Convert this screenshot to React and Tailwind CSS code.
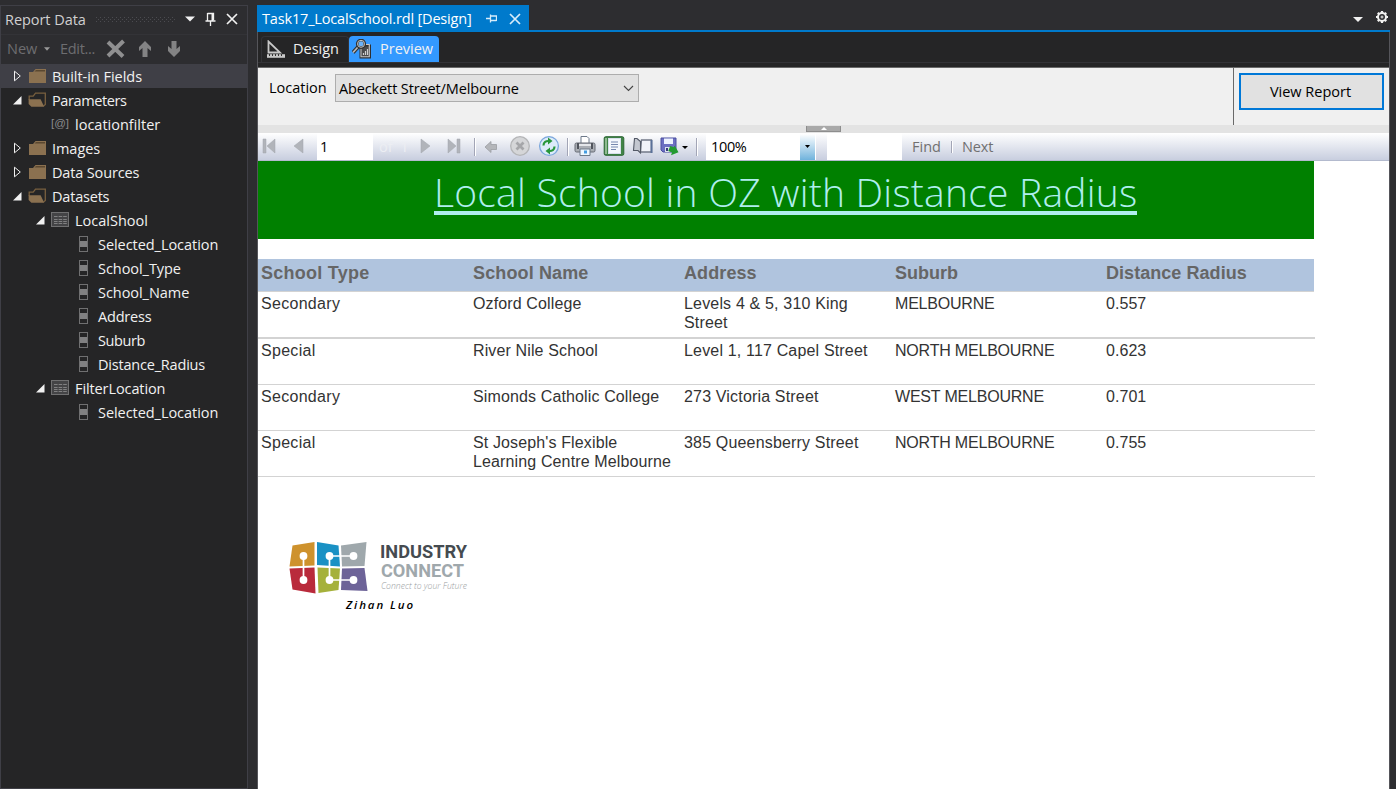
import React from 'react';

const UI = "font-['Open_Sans','Noto_Sans',sans-serif]";

function Folder({ open }) {
  return open ? (
    <svg width="19" height="16" viewBox="0 0 19 16">
      <path d="M1.2 8V4.2H5.2L7.5 1.2H17.3V12.5L15.5 14" fill="none" stroke="#79603f" strokeWidth="1.3" />
      <path d="M.6 7.2H12.6L16.2 14.8H3.4L.6 12Z" fill="#8b7150" />
    </svg>
  ) : (
    <svg width="19" height="16" viewBox="0 0 19 16">
      <path d="M1 4H5L7.5 1H18V15H1Z" fill="#8b7150" />
      <path d="M6.5 3.5L8 2H17V3.5Z" fill="#5b4830" />
    </svg>
  );
}

function Dataset() {
  return (
    <svg width="19" height="16" viewBox="0 0 19 16">
      <rect x=".5" y=".5" width="17" height="14" fill="#444446" stroke="#707071" />
      <path d="M3 4.5H16M3 7.5H16M3 9.5H16M3 11.5H16" stroke="#818182" strokeDasharray="3.6 1" />
    </svg>
  );
}

function Field() {
  return (
    <svg width="11" height="18" viewBox="0 0 11 18">
      <rect x=".5" y="1.5" width="8" height="15" fill="#252526" stroke="#707071" />
      <rect x="1" y="6" width="7" height="6" fill="#818182" />
    </svg>
  );
}

function Arrow({ open }) {
  return open ? (
    <svg width="10" height="10" viewBox="0 0 10 10"><path d="M9.5 1V9.5H1Z" fill="#f1f1f1" /></svg>
  ) : (
    <svg width="10" height="12" viewBox="0 0 10 12"><path d="M2.5 1.2L8.3 6L2.5 10.8Z" fill="none" stroke="#f1f1f1" /></svg>
  );
}

const tree = [
  { level: 0, kind: 'folder', text: 'Built-in Fields', track: 'tracking-[-0.03px]' },
  { level: 0, kind: 'folder', open: true, text: 'Parameters', track: 'tracking-[-0.4px]' },
  { level: 1, kind: 'param', text: 'locationfilter', track: 'tracking-[0px]' },
  { level: 0, kind: 'folder', text: 'Images', track: 'tracking-[-0.05px]' },
  { level: 0, kind: 'folder', text: 'Data Sources', track: 'tracking-[-0.15px]' },
  { level: 0, kind: 'folder', open: true, text: 'Datasets', track: 'tracking-[-0.2px]' },
  { level: 1, kind: 'dataset', open: true, text: 'LocalShool', track: 'tracking-[0px]' },
  { level: 2, kind: 'field', text: 'Selected_Location', track: 'tracking-[-0.05px]' },
  { level: 2, kind: 'field', text: 'School_Type', track: 'tracking-[-0.05px]' },
  { level: 2, kind: 'field', text: 'School_Name', track: 'tracking-[-0.05px]' },
  { level: 2, kind: 'field', text: 'Address', track: 'tracking-[-0.2px]' },
  { level: 2, kind: 'field', text: 'Suburb', track: 'tracking-[-0.4px]' },
  { level: 2, kind: 'field', text: 'Distance_Radius', track: 'tracking-[-0.2px]' },
  { level: 1, kind: 'dataset', open: true, text: 'FilterLocation', track: 'tracking-[-0.1px]' },
  { level: 2, kind: 'field', text: 'Selected_Location', track: 'tracking-[-0.05px]' },
];

const indent = ['pl-[11px]', 'pl-[34px]', 'pl-[57px]'];

function TreeRow({ item, selected }) {
  return (
    <div className={`flex h-6 items-center ${indent[item.level]} ${selected ? 'bg-[#3f3f46]' : ''}`}>
      <span className="flex w-4 items-center">
        {(item.kind === 'folder' || item.kind === 'dataset') && <Arrow open={item.open} />}
      </span>
      <span className="flex w-6 items-center">
        {item.kind === 'folder' && <Folder open={item.open} />}
        {item.kind === 'dataset' && <Dataset />}
        {item.kind === 'field' && <span className="pl-[5px]"><Field /></span>}
        {item.kind === 'param' && (
          <span className="w-[18px] text-center font-['Liberation_Sans',sans-serif] text-[11.5px] leading-none text-[#8a8a8b]">[@]</span>
        )}
      </span>
      <span className={`whitespace-nowrap pt-[2px] text-[14.5px] leading-6 text-[#f1f1f1] ${item.track}`}>{item.text}</span>
    </div>
  );
}

function Pin({ className, color }) {
  return (
    <svg className={className} width="13" height="15" viewBox="0 0 13 15" fill="none" stroke={color}>
      <path d="M3.5 1.5H9.5V8M3.5 1V8.5M1.5 9H11.5M6.5 9V14" strokeWidth="1.3" />
      <path d="M8.5 1.5V9" strokeWidth="2" />
    </svg>
  );
}

function Cross({ color, size }) {
  return (
    <svg width={size} height={size} viewBox="0 0 12 12"><path d="M1 1L11 11M11 1L1 11" stroke={color} strokeWidth="1.7" /></svg>
  );
}

function ReportData() {
  return (
    <aside className="mt-[5px] flex w-[248px] shrink-0 flex-col border border-[#3f3f46] bg-[#252526]">
      <div className="flex h-[28px] items-center bg-[#2d2d30] pl-1">
        <span className="w-[91px] whitespace-nowrap text-[14.5px] tracking-[-0.05px] text-[#d0d0d0]">Report Data</span>
        <svg width="80" height="7" viewBox="0 0 80 7">
          <defs>
            <pattern id="grip" width="4" height="4" patternUnits="userSpaceOnUse">
              <rect width="1" height="1" fill="#4b4b50" /><rect x="2" y="2" width="1" height="1" fill="#4b4b50" />
            </pattern>
          </defs>
          <rect width="80" height="6" fill="url(#grip)" />
        </svg>
        <svg className="-mt-[2px] ml-[9px]" width="10" height="6" viewBox="0 0 10 6"><path d="M0 .5H10L5 5.5Z" fill="#f1f1f1" /></svg>
        <Pin className="-mt-[2px] ml-[9px]" color="#f1f1f1" />
        <span className="-mt-[2px] ml-[9px]"><Cross color="#f1f1f1" size={12} /></span>
      </div>
      <div className="flex h-[30px] items-center border-t border-[#333337] bg-[#2d2d30] pb-[2px] pl-[6px] text-[14.5px] text-[#6d6d70]">
        <span className="w-[37px]">New</span>
        <svg width="6" height="4" viewBox="0 0 6 4"><path d="M0 .3H6L3 3.7Z" fill="#999" /></svg>
        <span className="ml-[10px] w-[46px] whitespace-nowrap tracking-[-0.3px]">Edit...</span>
        <svg width="20" height="20" viewBox="0 0 20 20"><path d="M2 3L17 17.5M17.5 2L2 17" stroke="#8f8f90" strokeWidth="4" /></svg>
        <svg className="ml-[12px]" width="14" height="18" viewBox="0 0 14 18"><path d="M7 1L13 7V11L9.5 8V17H4.5V8L1 11V7Z" fill="#838384" /></svg>
        <svg className="ml-[15px]" width="14" height="18" viewBox="0 0 14 18"><path d="M7 17L13 11V6L9.5 9V1H4.5V9L1 6V11Z" fill="#838384" /></svg>
      </div>
      <div>
        {tree.map((item, i) => <TreeRow key={i} item={item} selected={i === 0} />)}
      </div>
    </aside>
  );
}

function Nav({ type }) {
  const shapes = {
    first: <path d="M1 1H4V15H1ZM13 1V15L5 8Z" />,
    prev: <path d="M10 1V15L1 8Z" />,
    next: <path d="M1 1V15L10 8Z" />,
    last: <path d="M1 1V15L9 8ZM10 1H13V15H10Z" />,
  };
  return <svg width="14" height="16" viewBox="0 0 14 16" fill="#b1b4ba" stroke="#a3a6ac" strokeWidth=".5">{shapes[type]}</svg>;
}

function Divider() {
  return <span className="h-[18px] w-[2px] shrink-0 border-l border-[#a2a5b6] bg-white" />;
}

function Toolbar() {
  return (
    <div className="flex h-7 items-center border-b border-[#b3bace] bg-linear-to-b from-white to-[#c8cedf] text-[14.5px]">
      <span className="-mt-[2px] ml-1"><Nav type="first" /></span>
      <span className="-mt-[2px] ml-[17px]"><Nav type="prev" /></span>
      <span className="ml-[10px] h-[27px] w-14 bg-white pl-[3px] leading-[27px] text-black">1</span>
      <span className="ml-[6px] w-[34px] whitespace-pre text-[#eceef3]">of  1</span>
      <span className="-mt-[2px] ml-[7px]"><Nav type="next" /></span>
      <span className="-mt-[2px] ml-[13px]"><Nav type="last" /></span>
      <span className="ml-[13px] flex"><Divider /></span>
      <svg className="ml-[8px]" width="14" height="14" viewBox="0 0 14 14"><path d="M1 7L7 1.5V4.5H12.5V9.5H7V12.5Z" fill="#b4b6ba" stroke="#9b9da2" strokeWidth=".8" /></svg>
      <svg className="-mt-[2px] ml-[11px]" width="22" height="22" viewBox="0 0 22 22"><circle cx="11" cy="11" r="9.3" fill="#d5d6d8" stroke="#b4b5b7" strokeWidth="1.3" /><path d="M7.5 7.5L14.5 14.5M14.5 7.5L7.5 14.5" stroke="#a5a6a9" strokeWidth="2.8" /></svg>
      <svg className="-mt-[2px] ml-[7px]" width="22" height="22" viewBox="0 0 22 22">
        <circle cx="11" cy="11" r="9.4" fill="#dcebfa" stroke="#7ba7dc" strokeWidth="1.3" />
        <path d="M5.5 10.5C5.5 7 8 5.8 11 6M16.5 11.5C16.5 15 14 16.2 11 16" fill="none" stroke="#27963a" strokeWidth="2.2" />
        <path d="M10 2.5L14.5 6L10 9.5ZM12 12.5L7.5 16L12 19.5Z" fill="#27963a" />
      </svg>
      <span className="ml-[7px] flex"><Divider /></span>
      <svg className="-mt-[2px] ml-[5px]" width="22" height="22" viewBox="0 0 22 22">
        <path d="M7 8V1.5H13L15 3.5V8" fill="#fff" stroke="#6d7989" />
        <rect x="1" y="8" width="20" height="9" rx="1.5" fill="#a9adb4" stroke="#666b75" />
        <path d="M4 8V14M18 8V14" stroke="#50545d" strokeWidth="2" />
        <path d="M5 10H17" stroke="#e4e6ea" strokeWidth="2" />
        <path d="M6 14H16V20.5H6Z" fill="#edf7ff" stroke="#6c7888" /><path d="M10 15.5H13V18.5H10Z" fill="#439ce0" />
      </svg>
      <svg className="-mt-[2px] ml-[7px]" width="22" height="22" viewBox="0 0 22 22">
        <rect x="1.2" y="1.7" width="19.6" height="18.6" rx="1.5" fill="#408447" stroke="#2d6736" />
        <path d="M2 3H4V19H2Z" fill="#8fba91" />
        <rect x="5.5" y="3.5" width="12" height="15" fill="#f4f7fc" stroke="#d7dfeb" />
        <path d="M8 7H15M8 9.5H15M8 12H15M8 14.5H13" stroke="#7587ad" strokeWidth="1.2" />
      </svg>
      <svg className="-mt-[2px] ml-[7px]" width="22" height="20" viewBox="0 0 22 20">
        <path d="M9.5 4H19.5V16H8.5Z" fill="#f1f3f9" stroke="#737988" strokeWidth="1.3" />
        <path d="M2.5 2.5H5L8.5 5.5V17L6 14.5H1.5Z" fill="#c3c7d0" stroke="#535966" strokeWidth="1.1" />
        <path d="M19.5 4V17" stroke="#5a7199" strokeWidth="2" />
      </svg>
      <svg className="ml-[5px]" width="29" height="22" viewBox="0 0 29 22">
        <path d="M2 2H17V16H4L2 14Z" fill="#6c6fc2" stroke="#4a4ea0" />
        <path d="M5 2.5H14V8H5Z" fill="#edf2ff" /><path d="M6 11H13V16H6Z" fill="#dce2ef" /><path d="M7 12H9V15H7Z" fill="#35397a" />
        <path d="M10 11.5H14V9.5L20 14.5L14 20V17H10Z" fill="#249a31" transform="rotate(20 15 14)" />
        <path d="M23 10H29L26 13Z" fill="#000" />
      </svg>
      <span className="ml-[8px] flex"><Divider /></span>
      <span className="ml-[8px] h-[27px] w-[94px] bg-white pl-[5px] leading-[28px] tracking-[-0.35px] text-black">100%</span>
      <span className="flex h-[26px] w-[15px] items-center justify-center bg-linear-to-b from-white to-[#6fb3dc]">
        <svg width="5" height="3" viewBox="0 0 5 3"><path d="M0 0H5L2.5 3Z" fill="#000" /></svg>
      </span>
      <span className="h-[27px] w-px bg-white" />
      <span className="ml-[11px] h-[27px] w-[75px] bg-white" />
      <span className="ml-[10px] w-[39px] text-[#707070]">Find</span>
      <span className="flex h-3 w-[2px] border-l border-[#a2a5b6] bg-white" />
      <span className="ml-[9px] tracking-[-0.1px] text-[#707070]">Next</span>
    </div>
  );
}

const headings = ['School Type', 'School Name', 'Address', 'Suburb', 'Distance Radius'];
const headTracks = ['tracking-[0.25px]', 'tracking-[0.13px]', 'tracking-[0.1px]', 'tracking-[0px]', 'tracking-[0.05px]'];
const cellTracks = ['tracking-[0.3px]', 'tracking-[0.13px]', 'tracking-[0.17px]', 'tracking-[-0.2px]', 'tracking-[0.05px]'];
const schools = [
  ['Secondary', 'Ozford College', 'Levels 4 & 5, 310 King Street', 'MELBOURNE', '0.557'],
  ['Special', 'River Nile School', 'Level 1, 117 Capel Street', 'NORTH MELBOURNE', '0.623'],
  ['Secondary', 'Simonds Catholic College', '273 Victoria Street', 'WEST MELBOURNE', '0.701'],
  ['Special', "St Joseph's Flexible Learning Centre Melbourne", '385 Queensberry Street', 'NORTH MELBOURNE', '0.755'],
];

function Logo() {
  return (
    <svg className="ml-[30px] mt-[58px] block" width="186" height="82" viewBox="288 535 186 82">
      <path d="M292.5 545.5L314.5 542V565.5L289.5 566.5Z" fill="#ce922d" />
      <path d="M317 542L338.5 545.5L340 566.5L317 565Z" fill="#1a91c4" />
      <path d="M341 545.5L366.5 542L364.5 566L342 566.5Z" fill="#9fa8ac" />
      <path d="M289.5 568.5L314.5 567.5L315.5 593.5L292.5 589.5Z" fill="#b92a3b" />
      <path d="M317.5 567.5L340 568.5L338.5 590L318.5 593Z" fill="#a5b13b" />
      <path d="M342 568.5L364.5 568L367.5 591L341 590Z" fill="#6d6398" />
      <path d="M303.5 556V580M329.5 556H353.5M329.5 556V580M329.5 580H353.5" fill="none" stroke="#fff" strokeWidth="1.7" />
      <g fill="#fff">
        <circle cx="303.5" cy="556" r="3.9" /><circle cx="303.5" cy="580" r="3.9" />
        <circle cx="329.5" cy="556" r="3.9" /><circle cx="353.5" cy="556" r="3.9" />
        <circle cx="329.5" cy="580" r="3.9" /><circle cx="353.5" cy="580" r="3.9" />
      </g>
      <g fontFamily="Roboto, sans-serif">
        <text x="380" y="558" fontSize="18.5" fontWeight="700" fill="#454b50" textLength="87" lengthAdjust="spacingAndGlyphs">INDUSTRY</text>
        <text x="381" y="577" fontSize="18.5" fontWeight="700" fill="#9fa8ac" textLength="83" lengthAdjust="spacingAndGlyphs">CONNECT</text>
      </g>
      <text x="381" y="589" fontFamily="Open Sans, sans-serif" fontSize="9.5" fontStyle="italic" fontWeight="300" fill="#999da0" textLength="86" lengthAdjust="spacingAndGlyphs">Connect to your Future</text>
      <text x="346" y="609" fontFamily="Open Sans, sans-serif" fontSize="11.5" fontStyle="italic" fontWeight="600" fill="#000" textLength="67" lengthAdjust="spacing">Zihan Luo</text>
    </svg>
  );
}

function Report() {
  return (
    <div className="flex-1 bg-white">
      <div className="h-[78px] w-[1056px] bg-[#008000]">
        <h1 className="ml-[176px] pt-[7px] h-[54px] w-[703px] whitespace-nowrap border-b-4 border-[#afeeee] text-[39px] font-light leading-[48px] tracking-[0.23px] text-[#afeeee]">Local School in OZ with Distance Radius</h1>
      </div>
      <div className="mt-5 w-[1057px] font-['Liberation_Sans',sans-serif] text-[#333]">
        <div className="grid h-[33px] w-[1056px] grid-cols-[212px_211px_211px_211px_211px] border-b border-[#d3d3d3] bg-[#b0c4de] text-[18px] font-bold leading-[28px] text-[#666]">
          {headings.map((h, j) => <div key={h} className={`whitespace-nowrap pl-[3px] ${headTracks[j]}`}>{h}</div>)}
        </div>
        {schools.map((row, i) => (
          <div key={i} className={`grid grid-cols-[212px_211px_211px_211px_211px] border-[#d3d3d3] pt-[2px] text-base leading-[19px] ${i === 0 ? 'h-[47px] border-b-2' : 'h-[46px] border-b'}`}>
            {row.map((cell, j) => <div key={j} className={`pl-[3px] pr-1 ${cellTracks[j]}`}>{cell}</div>)}
          </div>
        ))}
      </div>
      <Logo />
    </div>
  );
}

function Parameters() {
  return (
    <div className="flex h-[57px] bg-[#f0f0f0] text-[14.5px] text-black">
      <span className="ml-[11px] mt-[10px] w-[66px] leading-5">Location</span>
      <div className="mt-[6px] flex h-7 w-[304px] items-center justify-between border border-[#adadad] bg-[#e1e1e1] pl-[3px] pr-[4px]">
        <span className="whitespace-nowrap pt-[2px] tracking-[-0.13px]">Abeckett Street/Melbourne</span>
        <svg width="11" height="7" viewBox="0 0 11 7"><path d="M1 1L5.5 5.5L10 1" fill="none" stroke="#444" strokeWidth="1.1" /></svg>
      </div>
      <div className="ml-auto w-[156px] border-l border-[#696969] pl-[5px] pt-[5px]">
        <button className="h-[37px] w-[145px] border-2 border-[#0078d7] bg-[#e1e1e1] pr-[2px]">View Report</button>
      </div>
    </div>
  );
}

function Gear() {
  return (
    <svg width="14" height="14" viewBox="0 0 14 14" fill="none" stroke="#f1f1f1">
      <circle cx="7" cy="7" r="4" strokeWidth="2" /><circle cx="7" cy="7" r="1" />
      <path d="M7 1V3M7 11V13M1 7H3M11 7H13M2.8 2.8L4 4M10 10L11.2 11.2M11.2 2.8L10 4M2.8 11.2L4 10" strokeWidth="2.2" />
    </svg>
  );
}

export default function App() {
  return (
    <div className={`flex h-[789px] w-[1396px] overflow-hidden bg-[#2d2d30] ${UI}`}>
      <ReportData />
      <main className="ml-[9px] flex w-[1139px] shrink-0 flex-col">
        <div className="mt-[5px] flex h-[25px] items-end">
          <div className="flex h-[25px] w-[272px] items-center bg-[#007acc] pl-[5px] pt-[2px] text-[14.5px] text-white">
            <span className="w-[210px] whitespace-nowrap tracking-[-0.17px]">Task17_LocalSchool.rdl [Design]</span>
            <svg className="ml-[14px]" width="11" height="9" viewBox="0 0 11 9" fill="none" stroke="#d8ecfa"><path d="M0 4.5H4M4.5 .5V8.5M4.5 2H10.5V7M4.5 6.5H10.5" strokeWidth="1.3" /></svg>
            <span className="ml-[12px]"><Cross color="#d8ecfa" size={12} /></span>
          </div>
          <div className="ml-auto flex h-[26px] items-center gap-3">
            <svg className="mt-1" width="10" height="5" viewBox="0 0 10 5"><path d="M0 0H10L5 5Z" fill="#f1f1f1" /></svg>
            <Gear />
          </div>
          <span className="w-[7px]" />
        </div>
        <div className="flex w-[1133px] flex-1 flex-col border-x border-[#55555a]">
          <div className="-mx-px h-[2px] bg-[#007acc]" />
          <div className="flex h-[35px] shrink-0 flex-col bg-[#252526]">
            <div className="flex h-[31px] items-end border-b border-[#333337] pl-[3px] text-[14.5px] text-[#f1f1f1]">
              <div className="flex h-[26px] w-[88px] items-center rounded-t-sm border border-b-0 border-[#333337] pb-px pl-[5px]">
                <svg width="18" height="19" viewBox="0 0 18 19" fill="none" stroke="#c8c8c8">
                  <path d="M1.5 1.5V12.5H13Z" strokeWidth="1.8" /><path d="M4.5 8V10H6.8Z" stroke="#252526" />
                  <path d="M0 16H18" strokeWidth="3.6" /><path d="M2.5 14V16M5.5 14V16M8.5 14V16M11.5 14V16M14.5 14V16" stroke="#333" />
                </svg>
                <span className="ml-[8px]">Design</span>
              </div>
              <div className="flex h-[26px] w-[90px] items-center rounded-t-sm bg-[#3399ff] pb-px pl-[3px]">
                <svg width="20" height="20" viewBox="0 0 20 20" fill="none">
                  <path d="M8.5 6.5H18V18.5H8.5Z" fill="#4a4a4a" stroke="#303030" strokeWidth="2" />
                  <path d="M9 8V17.8H17.3V5.5H14" stroke="#c8c8c8" strokeWidth="1.1" />
                  <path d="M11.5 16V14M13.5 16V12M15.5 16V10" stroke="#d0d0d0" strokeWidth="1.2" />
                  <path d="M1 13.5L6 8" stroke="#303030" strokeWidth="4" /><path d="M1 13.5L6 8" stroke="#bbb" strokeWidth="1.7" />
                  <circle cx="9" cy="4.8" r="3.8" fill="#6cb2f6" stroke="#303030" strokeWidth="2.6" /><circle cx="9" cy="4.8" r="3.5" stroke="#c8c8c8" strokeWidth="1" />
                </svg>
                <span className="ml-[8px]">Preview</span>
              </div>
            </div>
          </div>
          <div className="h-px shrink-0 bg-[#696969]" />
          <Parameters />
          <div className="flex h-2 justify-center bg-[#e3e3e3]">
            <span className="mt-px flex h-[6px] w-[35px] items-center justify-center border-x border-b border-[#8d8d8d] bg-[#a9a9a9]">
              <svg width="6" height="3" viewBox="0 0 6 3"><path d="M0 3L3 0L6 3Z" fill="#fff" /></svg>
            </span>
          </div>
          <Toolbar />
          <Report />
        </div>
      </main>
    </div>
  );
}
